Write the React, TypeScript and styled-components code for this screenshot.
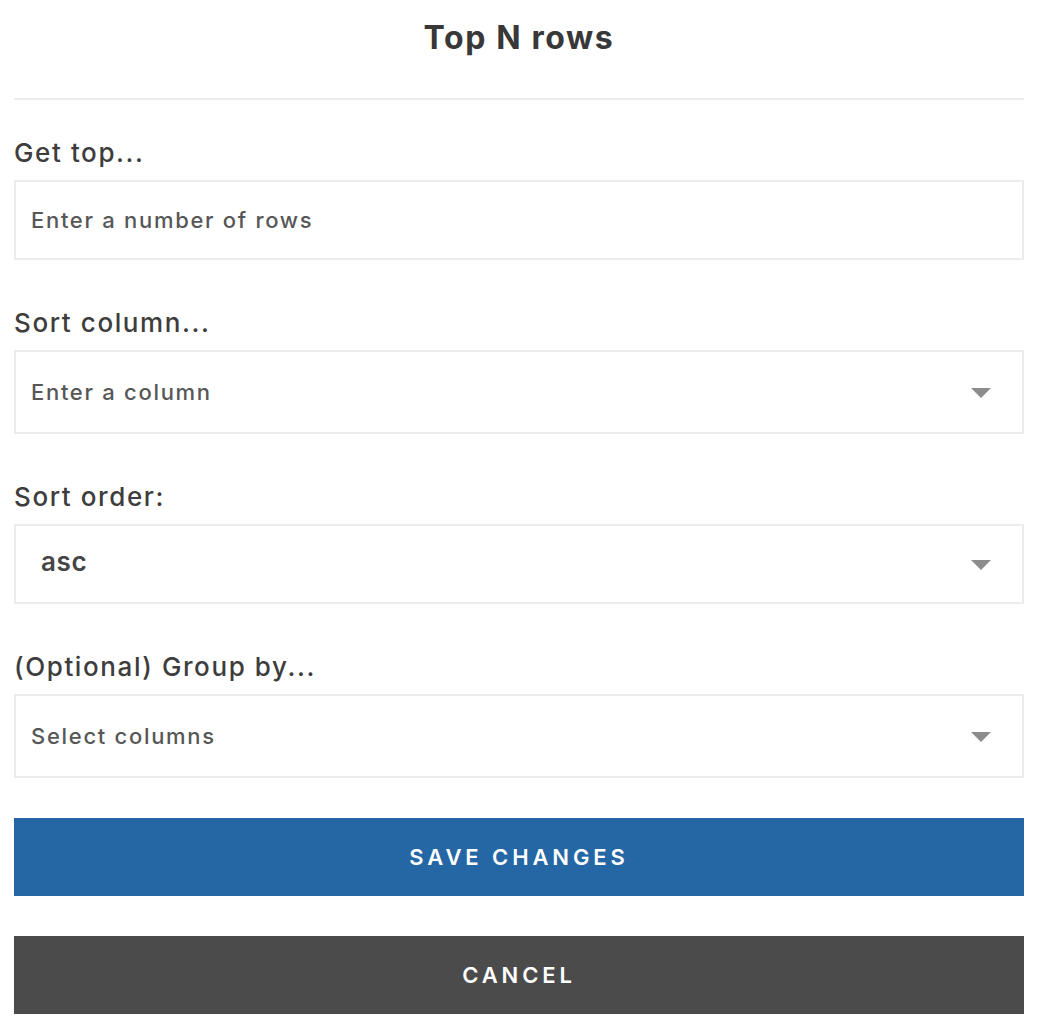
import React from 'react';
import styled, { createGlobalStyle } from 'styled-components';

const GlobalStyle = createGlobalStyle`
  html, body {
    margin: 0;
    padding: 0;
    background: #ffffff;
  }
  body {
    font-family: Inter, "Open Sans", "Liberation Sans", sans-serif;
    color: #3d3d3d;
  }
  * {
    box-sizing: border-box;
  }
`;

const Page = styled.div`
  width: 1040px;
  padding: 0 16px 0 14px;
`;

const Header = styled.div`
  height: 100px;
  display: flex;
  align-items: flex-start;
  justify-content: center;
  padding-top: 18px;
  border-bottom: 2px solid #ececec;
`;

const Title = styled.h1`
  margin: 0;
  font-size: 32px;
  line-height: 40px;
  font-weight: 700;
  letter-spacing: 1.6px;
  color: #383838;
`;

const Form = styled.div`
  display: flex;
  flex-direction: column;
  padding-top: 36px;
`;

const Field = styled.div`
  display: flex;
  flex-direction: column;

  & + & {
    margin-top: 46px;
  }
`;

const Label = styled.label`
  font-size: 26px;
  line-height: 34px;
  font-weight: 500;
  letter-spacing: 1.6px;
  color: #3d3d3d;
  margin-bottom: 10px;
`;

const Box = styled.div<{ tall?: boolean }>`
  position: relative;
  display: flex;
  align-items: center;
  height: ${({ tall }) => (tall ? 84 : 80)}px;
  border: 2px solid #ececec;
  padding: 0 60px 0 15px;
`;

const Placeholder = styled.span`
  font-size: 22px;
  font-weight: 500;
  letter-spacing: 1.7px;
  color: #575757;
`;

const Value = styled.span`
  font-size: 26px;
  font-weight: 600;
  letter-spacing: 0.6px;
  color: #454545;
  padding: 0 0 6px 10px;
`;

const Caret = styled.span`
  position: absolute;
  right: 31px;
  top: 50%;
  margin-top: -4px;
  width: 0;
  height: 0;
  border-left: 10px solid transparent;
  border-right: 10px solid transparent;
  border-top: 10px solid #8c8c8c;
`;

const Actions = styled.div`
  display: flex;
  flex-direction: column;
  gap: 40px;
  margin-top: 40px;
`;

const Button = styled.button<{ variant: 'primary' | 'secondary' }>`
  display: flex;
  align-items: center;
  justify-content: center;
  width: 100%;
  height: 78px;
  border: none;
  padding: 0;
  background: ${({ variant }) => (variant === 'primary' ? '#2566a4' : '#4b4b4b')};
  color: #ffffff;
  font-family: inherit;
  font-size: 22px;
  font-weight: 600;
  letter-spacing: 3.9px;
  text-transform: uppercase;
`;

type FieldDef = {
  label: string;
  text: string;
  isValue?: boolean;
  select?: boolean;
  tall?: boolean;
};

const fields: FieldDef[] = [
  { label: 'Get top...', text: 'Enter a number of rows' },
  { label: 'Sort column...', text: 'Enter a column', select: true, tall: true },
  { label: 'Sort order:', text: 'asc', isValue: true, select: true },
  { label: '(Optional) Group by...', text: 'Select columns', select: true, tall: true },
];

export default function App() {
  return (
    <>
      <GlobalStyle />
      <Page>
        <Header>
          <Title>Top N rows</Title>
        </Header>
        <Form>
          {fields.map((field) => (
            <Field key={field.label}>
              <Label>{field.label}</Label>
              <Box tall={field.tall}>
                {field.isValue ? (
                  <Value>{field.text}</Value>
                ) : (
                  <Placeholder>{field.text}</Placeholder>
                )}
                {field.select && <Caret />}
              </Box>
            </Field>
          ))}
          <Actions>
            <Button variant="primary">Save changes</Button>
            <Button variant="secondary">Cancel</Button>
          </Actions>
        </Form>
      </Page>
    </>
  );
}
